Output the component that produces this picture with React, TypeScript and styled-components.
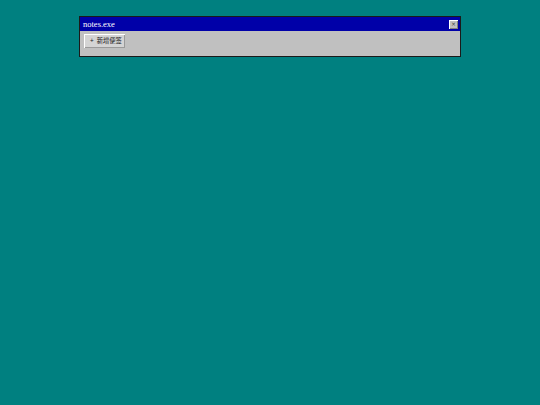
import styled, { createGlobalStyle } from "styled-components";

const GlobalStyle = createGlobalStyle`
  html, body {
    margin: 0;
    padding: 0;
    background: #008080;
    width: 540px;
    height: 405px;
    overflow: hidden;
  }
`;

const Desktop = styled.div`
  padding: 16px 0 0 79px;
`;

const Window = styled.div`
  width: 380px;
  border: 1px solid #1a1a1a;
  background: #c0c0c0;
`;

const TitleBar = styled.div`
  height: 14px;
  background: #0000a8;
  display: flex;
  align-items: center;
  justify-content: space-between;
  padding: 0 2px 0 3px;
`;

const TitleText = styled.span`
  color: #ffffff;
  font-family: "Liberation Serif", "DejaVu Serif", serif;
  font-size: 8.5px;
  line-height: 14px;
`;

const CloseButton = styled.button`
  width: 9px;
  height: 9px;
  padding: 0;
  margin: 0;
  border: none;
  background: #c0c0c0;
  box-shadow: inset 1px 1px 0 #ffffff, inset -1px -1px 0 #808080;
  display: flex;
  align-items: center;
  justify-content: center;
  color: #404040;
  font-family: "DejaVu Sans", sans-serif;
  font-size: 6px;
  line-height: 1;
`;

const Body = styled.div`
  padding: 3px 4px 8px 4px;
`;

const Toolbar = styled.div`
  display: flex;
  gap: 4px;
`;

const ToolButton = styled.button`
  height: 14px;
  padding: 0 3px 0 6px;
  border: none;
  background: #d4d4d4;
  box-shadow: inset 1px 1px 0 #ffffff, inset -1px -1px 0 #9a9a9a;
  display: flex;
  align-items: center;
  gap: 3px;
  color: #1a1a1a;
  font-family: "Liberation Sans", "Noto Sans CJK SC", sans-serif;
  font-size: 6.3px;
  line-height: 1;
`;

export default function App() {
  return (
    <>
      <GlobalStyle />
      <Desktop>
        <Window>
          <TitleBar>
            <TitleText>notes.exe</TitleText>
            <CloseButton aria-label="close">×</CloseButton>
          </TitleBar>
          <Body>
            <Toolbar>
              <ToolButton>
                <span>+</span>
                <span>新增便签</span>
              </ToolButton>
            </Toolbar>
          </Body>
        </Window>
      </Desktop>
    </>
  );
}
